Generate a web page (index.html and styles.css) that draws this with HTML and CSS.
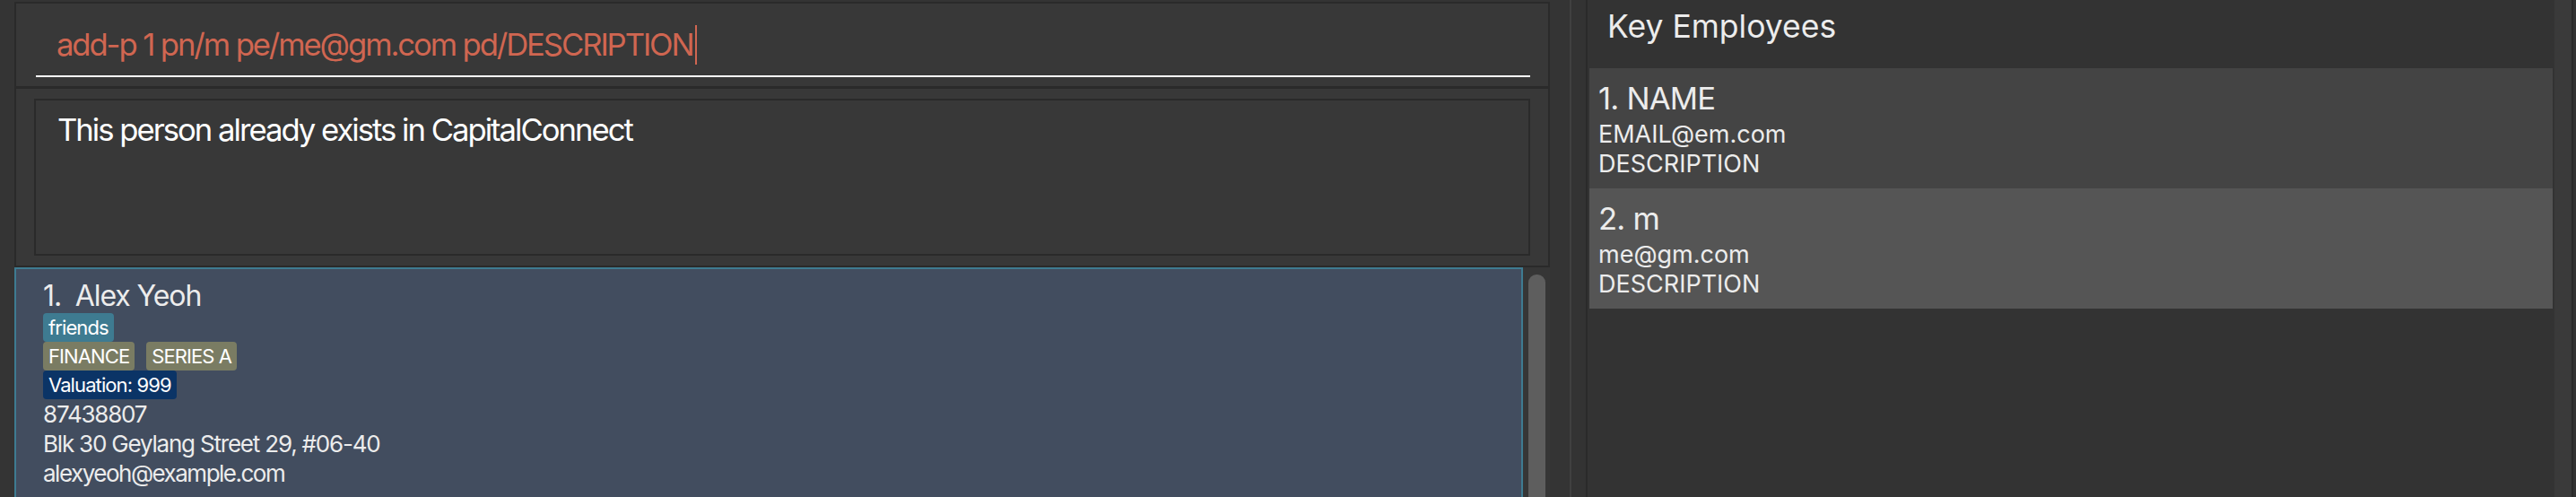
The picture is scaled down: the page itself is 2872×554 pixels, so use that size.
FILE: index.html
```html
<!DOCTYPE html>
<html>
<head>
<meta charset="utf-8">
<link rel="stylesheet" href="styles.css">
</head>
<body>
<div class="app">
  <div class="left">
    <div class="command-box">
      <div class="command-field"><span class="command-text">add-p 1 pn/m pe/me@gm.com pd/DESCRIPTION</span><span class="caret"></span></div>
    </div>
    <div class="result-box">
      <div class="result-area">This person already exists in CapitalConnect</div>
    </div>
    <div class="list-area">
      <div class="card">
        <div class="card-name">1.&nbsp; Alex Yeoh</div>
        <div class="tag-row"><span class="tag tag-friend">friends</span></div>
        <div class="tag-row"><span class="tag tag-olive">FINANCE</span><span class="tag tag-olive">SERIES A</span></div>
        <div class="tag-row"><span class="tag tag-val">Valuation: 999</span></div>
        <div class="card-line">87438807</div>
        <div class="card-line">Blk 30 Geylang Street 29, #06-40</div>
        <div class="card-line card-email">alexyeoh@example.com</div>
      </div>
      <div class="scrollbar"><div class="thumb"></div></div>
    </div>
  </div>
  <div class="divider"></div>
  <div class="right">
    <div class="right-main">
      <div class="right-header">Key Employees</div>
      <div class="emp emp-odd">
        <div class="emp-name">1. NAME</div>
        <div class="emp-line emp-first">EMAIL@em.com</div>
        <div class="emp-line">DESCRIPTION</div>
      </div>
      <div class="emp emp-even">
        <div class="emp-name">2. m</div>
        <div class="emp-line emp-first">me@gm.com</div>
        <div class="emp-line">DESCRIPTION</div>
      </div>
    </div>
    <div class="right-track"></div>
  </div>
</div>
</body>
</html>
```

FILE: styles.css
```css
html, body {
  margin: 0;
  padding: 0;
  background: #333333;
}
body {
  font-family: Inter, "Noto Sans", sans-serif;
}
.app {
  display: flex;
  height: 554px;
  overflow: hidden;
  background: #333333;
}
.left {
  width: 1750px;
  box-sizing: border-box;
  padding-left: 16px;
  padding-right: 22px;
  display: flex;
  flex-direction: column;
  background: #343434;
}
.command-box {
  margin-top: 2px;
  border: 2px solid #2a2a2a;
  background: #383838;
  padding: 13px 20px 10px 22px;
}
.command-field {
  padding: 11px 0 14px 23px;
  line-height: 42px;
  height: 42px;
  border-bottom: 2px solid #ffffff;
  font-size: 34.67px;
  letter-spacing: -2.1px;
  color: #d06651;
  white-space: nowrap;
  display: flex;
  align-items: flex-start;
}
.caret {
  display: inline-block;
  width: 2px;
  height: 44px;
  margin-left: 2px;
  background: #d06651;
}
.result-box {
  border-left: 2px solid #2a2a2a;
  border-right: 2px solid #2a2a2a;
  border-top: 1px solid #2a2a2a;
  border-bottom: 2px solid #2a2a2a;
  background: #383838;
  padding: 11px 20px 11px 20px;
}
.result-area {
  border: 2px solid #2a2a2a;
  padding: 11px 24px 0 24px;
  height: 160px;
  font-size: 34.67px;
  line-height: 42px;
  letter-spacing: -2px;
  color: #ffffff;
}
.list-area {
  flex: 1;
  display: flex;
  gap: 6px;
  background: #363636;
}
.card {
  width: 1682px;
  box-sizing: border-box;
  border: 2px solid #3e7b91;
  background: #424d5f;
  padding: 11px 0 0 30px;
  color: #ececec;
}
.card-name {
  font-size: 32px;
  line-height: 38px;
  letter-spacing: -1.1px;
}
.tag-row {
  display: flex;
  gap: 13px;
  height: 32px;
}
.tag {
  font-size: 22px;
  line-height: 28px;
  padding: 2px 6px;
  border-radius: 4px;
  letter-spacing: -0.9px;
  color: #ffffff;
}
.tag-friend { background: #3e7b91; }
.tag-olive { background: #7a7c63; }
.tag-val { background: #0b3466; }
.card-line {
  font-size: 26px;
  line-height: 33px;
  letter-spacing: -1.2px;
}
.card-email {
  letter-spacing: -1.5px;
}
.scrollbar {
  width: 19px;
  padding-top: 8px;
}
.thumb {
  height: 300px;
  background: #5e5e5e;
  border-radius: 9px;
}
.divider {
  width: 16px;
  border-left: 2px solid #404040;
  border-right: 2px solid #2a2a2a;
  background: #333333;
}
.right {
  flex: 1;
  display: flex;
}
.right-main {
  width: 1078px;
  background: #333333;
  color: #ececec;
}
.right-header {
  height: 76px;
  box-sizing: border-box;
  padding: 9px 0 0 22px;
  font-size: 35.5px;
  line-height: 42px;
}
.emp {
  margin: 0 2px;
  padding: 12px 0 11px 10px;
}
.emp-odd { background: #444444; }
.emp-even { background: #555555; }
.emp-name {
  font-size: 34.67px;
  line-height: 42px;
  letter-spacing: -0.8px;
}
.emp-line {
  font-size: 27px;
  line-height: 33px;
}
.emp-first { margin-top: 3px; }
.right-track {
  width: 19px;
  background: #3a3a3a;
  border-right: 2px solid #2a2a2a;
}
```
